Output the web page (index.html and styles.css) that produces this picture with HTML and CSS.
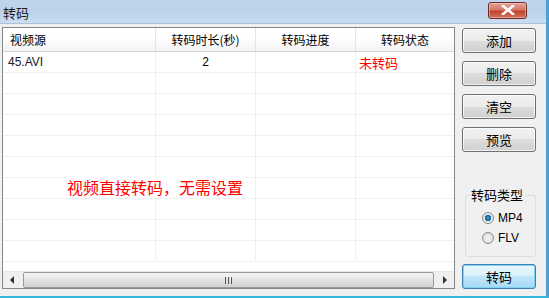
FILE: index.html
```html
<!DOCTYPE html>
<html lang="zh-CN">

<head>
    <meta charset="UTF-8">
    <title>转码</title>
    <link rel="stylesheet" href="styles.css">
</head>

<body>
    <div class="window">
        <div class="titlebar">
            <div class="title">转码</div>
            <div class="close-btn">
                <svg width="14" height="10" viewBox="0 0 14 10">
                    <path d="M2 1 L12 9 M12 1 L2 9" stroke="#fff" stroke-width="2.6" stroke-linecap="square" />
                </svg>
            </div>
        </div>

        <div class="content">
            <div class="list-view">
                <div class="list-header">
                    <div class="col col-name">视频源</div>
                    <div class="col col-time">转码时长(秒)</div>
                    <div class="col col-progress">转码进度</div>
                    <div class="col col-status">转码状态</div>
                </div>
                <div class="list-body">
                    <div class="row">
                        <div class="cell cell-name">45.AVI</div>
                        <div class="cell cell-time">2</div>
                        <div class="cell"></div>
                        <div class="cell cell-status">未转码</div>
                    </div>
                    <div class="row"><div class="cell"></div><div class="cell"></div><div class="cell"></div><div class="cell"></div></div>
                    <div class="row"><div class="cell"></div><div class="cell"></div><div class="cell"></div><div class="cell"></div></div>
                    <div class="row"><div class="cell"></div><div class="cell"></div><div class="cell"></div><div class="cell"></div></div>
                    <div class="row"><div class="cell"></div><div class="cell"></div><div class="cell"></div><div class="cell"></div></div>
                    <div class="row"><div class="cell"></div><div class="cell"></div><div class="cell"></div><div class="cell"></div></div>
                    <div class="row"><div class="cell"></div><div class="cell"></div><div class="cell"></div><div class="cell"></div></div>
                    <div class="row"><div class="cell"></div><div class="cell"></div><div class="cell"></div><div class="cell"></div></div>
                    <div class="row"><div class="cell"></div><div class="cell"></div><div class="cell"></div><div class="cell"></div></div>
                    <div class="row"><div class="cell"></div><div class="cell"></div><div class="cell"></div><div class="cell"></div></div>
                    <div class="hint">视频直接转码，无需设置</div>
                </div>
                <div class="hscroll">
                    <div class="arrow">
                        <svg width="5" height="8" viewBox="0 0 5 8"><path d="M4 0 L0 4 L4 8 Z" fill="#333" /></svg>
                    </div>
                    <div class="thumb">
                        <span class="grip"></span><span class="grip"></span><span class="grip"></span>
                    </div>
                    <div class="arrow">
                        <svg width="5" height="8" viewBox="0 0 5 8"><path d="M1 0 L5 4 L1 8 Z" fill="#333" /></svg>
                    </div>
                </div>
            </div>

            <div class="side">
                <div class="btn">添加</div>
                <div class="btn">删除</div>
                <div class="btn">清空</div>
                <div class="btn">预览</div>

                <div class="group">
                    <div class="group-title">转码类型</div>
                    <div class="radio-row">
                        <span class="radio checked"></span>
                        <span>MP4</span>
                    </div>
                    <div class="radio-row">
                        <span class="radio"></span>
                        <span>FLV</span>
                    </div>
                </div>

                <div class="btn btn-focus">转码</div>
            </div>
        </div>
    </div>
</body>

</html>
```

FILE: styles.css
```css
* {
    margin: 0;
    padding: 0;
    box-sizing: border-box;
}

body {
    width: 549px;
    height: 298px;
    overflow: hidden;
    font-family: "Noto Sans CJK SC", "Liberation Sans", sans-serif;
    font-size: 12px;
    color: #000;
    background: #f0f0f0;
}

.window {
    width: 549px;
    height: 298px;
    display: flex;
    flex-direction: column;
    background: #f0f0f0;
    border-right: 3px solid #4aa3d8;
    border-bottom: 2px solid #36b6dc;
}

.titlebar {
    height: 24px;
    display: flex;
    align-items: center;
    justify-content: space-between;
    padding: 0 19px 0 3px;
    background: linear-gradient(#c0d5ec, #bcd2ea 50%, #cadcf0);
    border-bottom: 1px solid #aac2de;
}

.title {
    font-size: 13px;
    color: #1e1e1e;
    margin-top: 1px;
}

.close-btn {
    width: 39px;
    height: 17px;
    margin-top: -3px;
    display: flex;
    justify-content: center;
    align-items: center;
    border: 1px solid #6d2a26;
    border-radius: 3px;
    background: linear-gradient(#e5a395, #d47766 45%, #c1442f 55%, #d0735c);
    box-shadow: inset 0 0 0 1px rgba(255, 255, 255, 0.35);
}

.content {
    flex: 1;
    display: flex;
    padding: 3px 0 7px 2px;
}

.list-view {
    width: 453px;
    display: flex;
    flex-direction: column;
    border: 1px solid #828790;
    background: #fff;
}

.list-header {
    height: 24px;
    display: grid;
    grid-template-columns: 153px 100px 100px 1fr;
    background: linear-gradient(#ffffff 40%, #f3f4f6);
    border-bottom: 1px solid #d5d5d5;
}

.col {
    display: flex;
    align-items: center;
    justify-content: center;
    border-right: 1px solid #e3e5e8;
    font-size: 12px;
}

.col-name {
    justify-content: flex-start;
    padding-left: 7px;
}

.col-status {
    border-right: none;
}

.list-body {
    flex: 1;
    overflow: hidden;
    position: relative;
}

.row {
    height: 21px;
    display: grid;
    grid-template-columns: 153px 100px 100px 1fr;
    border-bottom: 1px solid #f0f0f0;
}

.cell {
    display: flex;
    align-items: center;
    border-right: 1px solid #f0f0f0;
    font-size: 12px;
}

.cell:last-child {
    border-right: none;
}

.cell-name {
    padding-left: 5px;
    font-family: "Liberation Sans", sans-serif;
    color: #1a1a2e;
}

.cell-time {
    justify-content: center;
    font-family: "Liberation Sans", sans-serif;
}

.cell-status {
    padding-left: 3px;
    color: #ff0000;
    font-size: 13px;
}

.hint {
    position: absolute;
    left: 64px;
    top: 125px;
    color: #ff0000;
    font-size: 16px;
    background: #fff;
    line-height: 20px;
}

.hscroll {
    height: 17px;
    display: flex;
    background: #f0f0f0;
    border-top: 1px solid #e8e8e8;
}

.arrow {
    width: 19px;
    display: flex;
    align-items: center;
    justify-content: center;
}

.thumb {
    flex: 1;
    margin: 0 1px;
    display: flex;
    justify-content: center;
    align-items: center;
    gap: 2px;
    border: 1px solid #9a9a9a;
    border-radius: 2px;
    background: linear-gradient(#f4f4f4, #e4e4e4 50%, #d0d0d0);
}

.grip {
    width: 1px;
    height: 7px;
    background: #555;
}

.side {
    flex: 1;
    display: flex;
    flex-direction: column;
    padding: 1px 10px 0 7px;
}

.btn {
    height: 25px;
    margin-bottom: 8px;
    display: flex;
    align-items: center;
    justify-content: center;
    font-size: 13px;
    border: 1px solid #707070;
    border-radius: 3px;
    background: linear-gradient(#f2f2f2, #ebebeb 50%, #dddddd 50%, #cfcfcf);
    box-shadow: inset 0 0 0 1px rgba(255, 255, 255, 0.7);
}

.btn-focus {
    margin-top: auto;
    margin-bottom: 0;
    border-color: #3c7fb1;
    box-shadow: inset 0 0 0 1px #7fd3f5;
    background: linear-gradient(#eaf6fd, #d9f0fc 50%, #bee6fd 50%, #a7d9f5);
}

.group {
    margin: 35px 0 0 3px;
    height: 62px;
    border: 1px solid #d5dfe5;
    border-radius: 3px;
    position: relative;
    display: flex;
    flex-direction: column;
    padding: 14px 0 0 16px;
    gap: 4px;
}

.group-title {
    position: absolute;
    top: -9px;
    left: 3px;
    padding: 0 2px;
    background: #f0f0f0;
    font-size: 13px;
    line-height: 16px;
}

.radio-row {
    display: flex;
    align-items: center;
    gap: 4px;
    font-family: "Liberation Sans", sans-serif;
    font-size: 12px;
    height: 16px;
}

.radio {
    width: 12px;
    height: 12px;
    border-radius: 50%;
    border: 1px solid #8e8f8f;
    background: radial-gradient(circle, #f4f4f4, #d4d4d4);
}

.radio.checked {
    background: radial-gradient(circle, #3aa1e1 0, #1e5f94 3px, #ececec 3.5px, #d8d8d8);
}
```
